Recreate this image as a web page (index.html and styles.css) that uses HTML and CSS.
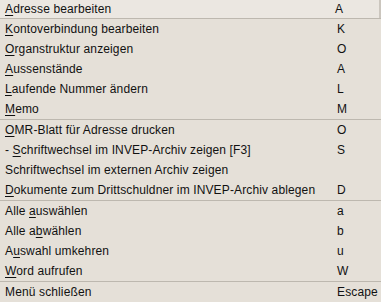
FILE: index.html
```html
<!DOCTYPE html>
<html lang="de">
<head>
    <meta charset="UTF-8">
    <title>Menü</title>
    <link rel="stylesheet" href="styles.css">
</head>
<body>
    <ul class="menu">
        <li class="item active"><span class="label"><u>A</u>dresse bearbeiten</span><span class="key">A</span></li>
        <li class="item sep"><span class="label"><u>K</u>ontoverbindung bearbeiten</span><span class="key">K</span></li>
        <li class="item"><span class="label"><u>O</u>rganstruktur anzeigen</span><span class="key">O</span></li>
        <li class="item"><span class="label"><u>A</u>ussenstände</span><span class="key">A</span></li>
        <li class="item"><span class="label"><u>L</u>aufende Nummer ändern</span><span class="key">L</span></li>
        <li class="item"><span class="label"><u>M</u>emo</span><span class="key">M</span></li>
        <li class="item sep"><span class="label"><u>O</u>MR-Blatt für Adresse drucken</span><span class="key">O</span></li>
        <li class="item"><span class="label">- <u>S</u>chriftwechsel im INVEP-Archiv zeigen [F3]</span><span class="key">S</span></li>
        <li class="item"><span class="label">Schriftwechsel im externen Archiv zeigen</span><span class="key"></span></li>
        <li class="item"><span class="label"><u>D</u>okumente zum Drittschuldner im INVEP-Archiv ablegen</span><span class="key">D</span></li>
        <li class="item sep"><span class="label">Alle <u>a</u>uswählen</span><span class="key">a</span></li>
        <li class="item"><span class="label">Alle a<u>b</u>wählen</span><span class="key">b</span></li>
        <li class="item"><span class="label">A<u>u</u>swahl umkehren</span><span class="key">u</span></li>
        <li class="item"><span class="label"><u>W</u>ord aufrufen</span><span class="key">W</span></li>
        <li class="item sep"><span class="label">Menü schließen</span><span class="key">Escape</span></li>
    </ul>
</body>
</html>
```

FILE: styles.css
```css
body {
    margin: 0;
    background-color: #e5e0d8;
    font-family: "Liberation Sans", Arial, sans-serif;
    font-size: 12px;
    letter-spacing: 0.13px;
    color: #111;
}
.menu {
    list-style: none;
    margin: 0;
    padding: 0;
    width: 381px;
}
.item {
    display: flex;
    align-items: center;
    height: 20px;
    padding-left: 5px;
    box-sizing: border-box;
    white-space: nowrap;
}
.item.sep {
    border-top: 1px solid #bdb8af;
    height: 21px;
}
.item.active {
    height: 18px;
    background-color: #ebe7e1;
    border-right: 2px solid #cbc6be;
}
.label {
    flex: 1;
}
.label u {
    text-decoration: underline;
    text-underline-offset: 2px;
}
.key {
    width: 44px;
}
```
